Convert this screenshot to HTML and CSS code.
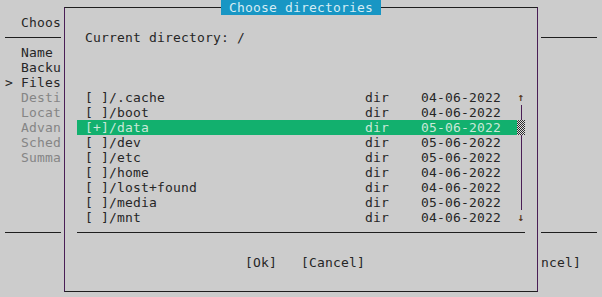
FILE: index.html
```html
<!DOCTYPE html>
<html>
<head>
<meta charset="utf-8">
<link rel="stylesheet" href="styles.css">
</head>
<body>
<div class="screen">
  <div class="line"></div>
  <div class="line">  Choose source files</div>
  <div class="rule"></div>
  <div class="line">  Name</div>
  <div class="line">  Backup type</div>
  <div class="line">&gt; Files</div>
  <div class="line muted">  Destination</div>
  <div class="line muted">  Location</div>
  <div class="line muted">  Advanced</div>
  <div class="line muted">  Schedule</div>
  <div class="line muted">  Summary</div>
  <div class="line"></div>
  <div class="line"></div>
  <div class="line"></div>
  <div class="line"></div>
  <div class="rule"></div>
  <div class="line"></div>
  <div class="line buttons">[Cancel]</div>

  <div class="dialog">
    <div class="frame">
      <div class="title"> Choose directories </div>
      <div class="line"></div>
      <div class="line"> Current directory: /</div>
      <div class="line"></div>
      <div class="line"></div>
      <div class="line"></div>
      <div class="list">
        <div class="entries">
          <div class="entry"><span>[ ]/.cache</span><span>dir</span><span>04-06-2022</span></div>
          <div class="entry"><span>[ ]/boot</span><span>dir</span><span>04-06-2022</span></div>
          <div class="entry selected"><span>[+]/data</span><span>dir</span><span>05-06-2022</span></div>
          <div class="entry"><span>[ ]/dev</span><span>dir</span><span>05-06-2022</span></div>
          <div class="entry"><span>[ ]/etc</span><span>dir</span><span>05-06-2022</span></div>
          <div class="entry"><span>[ ]/home</span><span>dir</span><span>04-06-2022</span></div>
          <div class="entry"><span>[ ]/lost+found</span><span>dir</span><span>04-06-2022</span></div>
          <div class="entry"><span>[ ]/media</span><span>dir</span><span>05-06-2022</span></div>
          <div class="entry"><span>[ ]/mnt</span><span>dir</span><span>04-06-2022</span></div>
        </div>
        <div class="scrollbar">
          <div class="arrow">↑</div>
          <div class="track"></div>
          <div class="thumb"></div>
          <div class="track grow"></div>
          <div class="arrow">↓</div>
        </div>
      </div>
      <div class="rule inner"></div>
      <div class="line"></div>
      <div class="line dlg-buttons"><span>[Ok]</span><span>[Cancel]</span></div>
    </div>
  </div>
</div>
</body>
</html>
```

FILE: styles.css
```css
html, body {
  margin: 0;
  padding: 0;
  background: #cccccc;
}
body {
  width: 602px;
  height: 297px;
  overflow: hidden;
}
.screen {
  position: relative;
  padding-left: 5px;
  width: 592px;
  font-family: "DejaVu Sans Mono", monospace;
  font-size: 13px;
  letter-spacing: 0.174px;
  color: #262626;
}
.line {
  height: 15px;
  line-height: 15px;
  white-space: pre;
  overflow: hidden;
}
.muted {
  color: #858585;
}
.rule {
  height: 15px;
  background: linear-gradient(#1e1e1e, #1e1e1e) 0 7px / 100% 1px no-repeat;
}
.buttons {
  text-align: right;
  padding-right: 16px;
}
.dialog {
  position: absolute;
  left: 61px;
  top: 0;
  width: 480px;
  height: 297px;
  box-sizing: border-box;
  padding: 7px 3px 0 3px;
  background: #cccccc;
}
.frame {
  position: relative;
  box-sizing: border-box;
  height: 285px;
  padding: 7px 0 0 12px;
  border-top: 1px solid #1e1e1e;
  border-bottom: 1px solid #1e1e1e;
  border-left: 1px solid #4a1e56;
  border-right: 1px solid #4a1e56;
}
.title {
  position: absolute;
  left: 156px;
  top: -8px;
  width: 160px;
  height: 15px;
  line-height: 15px;
  white-space: pre;
  background: #1896c4;
  color: #d4ecf4;
}
.list {
  display: flex;
  width: 448px;
}
.entries {
  width: 440px;
}
.entry {
  display: grid;
  grid-template-columns: 280px 56px 96px;
  box-sizing: border-box;
  padding-left: 8px;
  height: 15px;
  line-height: 15px;
  white-space: pre;
}
.entry.selected {
  background: #12b06e;
  color: #c9e9d9;
}
.scrollbar {
  width: 8px;
  display: flex;
  flex-direction: column;
  align-items: center;
}
.arrow {
  height: 15px;
  line-height: 15px;
  color: #5a3a1e;
  font-size: 11px;
  font-weight: bold;
}
.track {
  width: 1px;
  height: 15px;
  background: #4a1e56;
}
.track.grow {
  height: 75px;
}
.thumb {
  width: 8px;
  height: 15px;
  background: repeating-conic-gradient(#2a2a2a 0 25%, #e0e0e0 0 50%) 0 0 / 2px 2px;
}
.rule.inner {
  width: 448px;
}
.dlg-buttons {
  padding-left: 168px;
  display: flex;
  gap: 24px;
}
```
